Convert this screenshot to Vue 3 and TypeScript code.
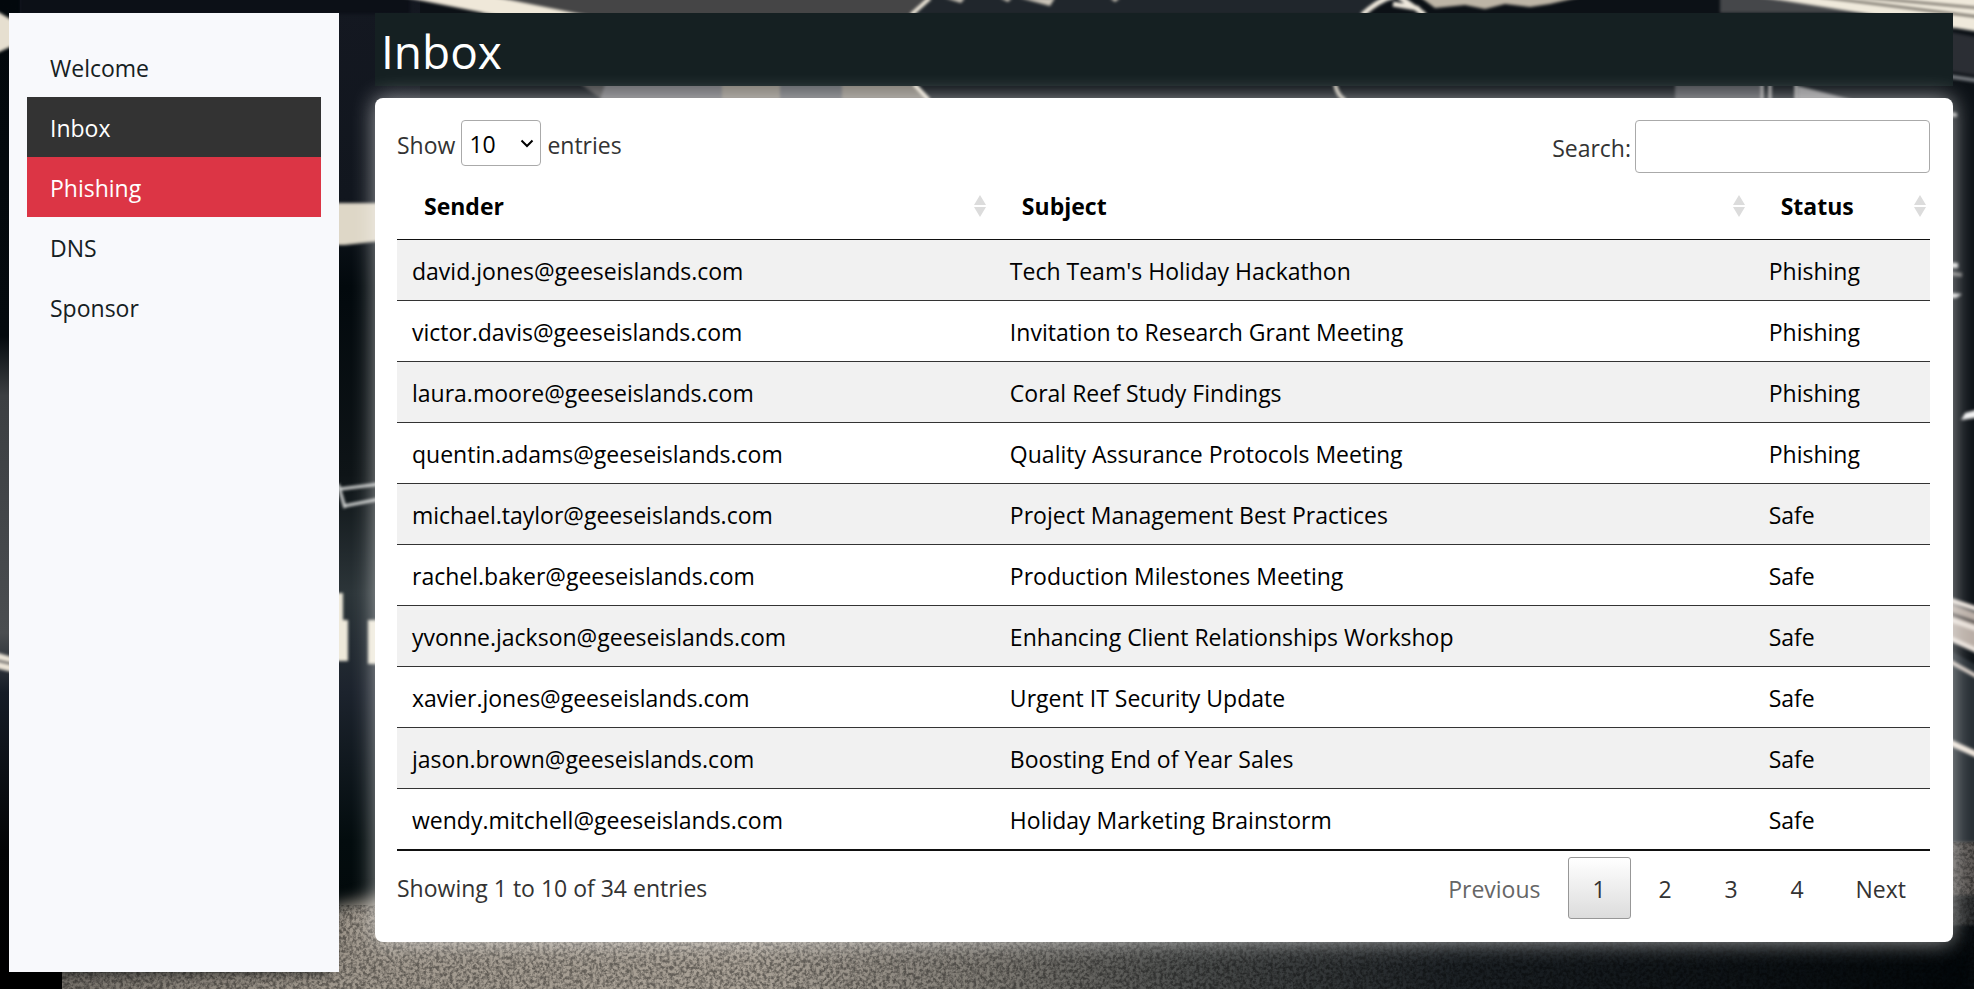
<script setup lang="ts">
import { computed, ref } from 'vue'

interface Mail {
  sender: string
  subject: string
  status: 'Phishing' | 'Safe'
}

interface NavItem {
  label: string
  kind: '' | 'current' | 'alert'
}

const nav: NavItem[] = [
  { label: 'Welcome', kind: '' },
  { label: 'Inbox', kind: 'current' },
  { label: 'Phishing', kind: 'alert' },
  { label: 'DNS', kind: '' },
  { label: 'Sponsor', kind: '' },
]

const columns = ['Sender', 'Subject', 'Status']

const mails: Mail[] = [
  { sender: 'david.jones@geeseislands.com', subject: "Tech Team's Holiday Hackathon", status: 'Phishing' },
  { sender: 'victor.davis@geeseislands.com', subject: 'Invitation to Research Grant Meeting', status: 'Phishing' },
  { sender: 'laura.moore@geeseislands.com', subject: 'Coral Reef Study Findings', status: 'Phishing' },
  { sender: 'quentin.adams@geeseislands.com', subject: 'Quality Assurance Protocols Meeting', status: 'Phishing' },
  { sender: 'michael.taylor@geeseislands.com', subject: 'Project Management Best Practices', status: 'Safe' },
  { sender: 'rachel.baker@geeseislands.com', subject: 'Production Milestones Meeting', status: 'Safe' },
  { sender: 'yvonne.jackson@geeseislands.com', subject: 'Enhancing Client Relationships Workshop', status: 'Safe' },
  { sender: 'xavier.jones@geeseislands.com', subject: 'Urgent IT Security Update', status: 'Safe' },
  { sender: 'jason.brown@geeseislands.com', subject: 'Boosting End of Year Sales', status: 'Safe' },
  { sender: 'wendy.mitchell@geeseislands.com', subject: 'Holiday Marketing Brainstorm', status: 'Safe' },
]

const total = 34
const pageSize = ref(10)
const query = ref('')
const page = ref(1)

const rows = computed(() => {
  const q = query.value.trim().toLowerCase()
  return mails.filter((m) => `${m.sender} ${m.subject} ${m.status}`.toLowerCase().includes(q))
})
</script>

<template>
  <div class="page">
    <svg class="backdrop" viewBox="0 0 1974 989" preserveAspectRatio="none" aria-hidden="true">
      <defs>
        <filter id="soft" x="-5%" y="-5%" width="110%" height="110%" color-interpolation-filters="sRGB">
          <feGaussianBlur stdDeviation="1.5" />
        </filter>
        <filter id="softer" x="-5%" y="-20%" width="110%" height="140%" color-interpolation-filters="sRGB">
          <feGaussianBlur stdDeviation="8" />
        </filter>
        <filter id="grain" x="0" y="0" width="100%" height="100%" color-interpolation-filters="sRGB">
          <feTurbulence type="fractalNoise" baseFrequency="0.3" numOctaves="3" seed="4" />
          <feColorMatrix values="0 0 0 0 0  0 0 0 0 0  0 0 0 0 0  3 0 0 0 -1.1" />
        </filter>
        <linearGradient id="floor" gradientUnits="userSpaceOnUse" x1="0" x2="1974" y1="0" y2="0">
          <stop offset="0" stop-color="#6c6862" />
          <stop offset="0.16" stop-color="#a0988d" />
          <stop offset="0.38" stop-color="#aaa297" />
          <stop offset="0.5" stop-color="#7f7b74" />
          <stop offset="0.6" stop-color="#4b4d4c" />
          <stop offset="0.74" stop-color="#1b2024" />
          <stop offset="1" stop-color="#02070a" />
        </linearGradient>
        <linearGradient id="wall" x1="0" x2="0" y1="0" y2="1">
          <stop offset="0" stop-color="#141821" />
          <stop offset="0.2" stop-color="#11161e" />
          <stop offset="0.29" stop-color="#02090d" />
          <stop offset="0.48" stop-color="#0e1417" />
          <stop offset="0.6" stop-color="#2c3539" />
          <stop offset="0.7" stop-color="#1c232d" />
          <stop offset="0.85" stop-color="#030c0e" />
          <stop offset="1" stop-color="#020708" />
        </linearGradient>
        <linearGradient id="edge" x1="0" x2="0" y1="0" y2="1">
          <stop offset="0" stop-color="#02080c" />
          <stop offset="0.34" stop-color="#040a0e" />
          <stop offset="0.4" stop-color="#3c3f42" />
          <stop offset="0.64" stop-color="#4a4d50" />
          <stop offset="0.7" stop-color="#151c26" />
          <stop offset="0.86" stop-color="#030405" />
          <stop offset="1" stop-color="#000" />
        </linearGradient>
      </defs>
      <rect width="1974" height="989" fill="#0c1116" />
      <rect x="20" width="400" height="989" fill="url(#wall)" />
      <rect width="20" height="989" fill="url(#edge)" />
      <path d="M330 908 380 896H1974V1010H40V970H330z" fill="url(#floor)" filter="url(#softer)" />
      <g filter="url(#soft)">
        <rect x="20" y="-4" width="390" height="18" fill="#0c1017" />
        <path d="M-5 10 12 20V46L-5 54z" fill="#e6dfd0" />
        <path d="M-5 652 12 657V672L-5 668z" fill="#ece5d8" />
        <path d="M-5 660 12 664" stroke="#555" stroke-width="2" />
        <path d="M460-3H930L905 98H600z" fill="#454546" />
        <path d="M398-4H490L590 16H500z" fill="#efe8d9" />
        <path d="M605 84H722V100H600z" fill="#68686c" />
        <path d="M722 84h58v16h-58zM842 84h75l12 16h-87z" fill="#847f77" />
        <path d="M780 84h62v16h-62z" fill="#606266" />
        <path d="M932-3H1400L1360 15H912z" fill="#20262c" />
        <path d="M930-2 911 15M914 84l15 16" stroke="#efe8da" stroke-width="4" fill="none" />
        <path d="M945-2h20l-4 5zM1020-2h35l-5 8zM1000-2h12l-4 4zM1110-2h10l-5 4z" fill="#c9c3b7" />
        <path d="M1362 15q18-16 32-19M1393 4l24 4 8 8M1398-4l26 18" stroke="#efe9dd" stroke-width="5" fill="none" />
        <path d="M1420-3h160l-30 7-20 3-25-3-20 5-20-4-30 3z" fill="#bdb5a6" />
        <path d="M1335 84q2 11 10 16" stroke="#c8c2b6" stroke-width="4" fill="none" />
        <path d="M1675 84h85v16h-85z" fill="#45474c" />
        <path d="M1762 84v16M1770 84v16M1796 84v16" stroke="#a9a8a8" stroke-width="3" />
        <path d="M1798 86l55 14h-55z" fill="#8b8b8d" />
        <path d="M1720-3h80l155 32V13H1720z" fill="#45474a" />
        <path d="M1760-3H1980V32L1830 8z" fill="#efe9db" />
        <path d="M1820-3 1980 17M1860-3 1980 8" stroke="#625d55" stroke-width="2" />
        <path d="M1940 30 1980 38V76L1940 70z" fill="#2b2e34" />
        <path d="M1940 75 1980 81" stroke="#777b80" stroke-width="4" />
        <path d="M1940 110l17 3v4h-17z" fill="#aaa" />
        <path d="M1940 262l18 1v5h-18zM1940 292l22 2-6 4h-16z" fill="#ddd" />
        <path d="M1940 272l22 3" stroke="#777" stroke-width="4" />
        <path d="M1980 409l-15 4-4 7 19-3z" fill="#f2f2f2" />
        <path d="M1940 600 1980 614V655L1940 632z" fill="#b9aea6" />
        <path d="M1940 597l40 13M1940 616l40 14M1940 634l40 18" stroke="#e9e1da" stroke-width="5" />
        <path d="M1940 610l40 14" stroke="#5d5855" stroke-width="3" />
        <path d="M1940 645l40 22V845H1940z" fill="#252c32" />
        <path d="M1940 656l40 22" stroke="#d6ccc4" stroke-width="4" />
        <path d="M1940 738l40 18" stroke="#efe6dc" stroke-width="6" />
        <path d="M330 203H390V240L345 245H330z" fill="#ded7c7" />
        <path d="M338 484l7 24M340 489l40-5M344 506l36-7" stroke="#d3d5d4" stroke-width="3" fill="none" />
        <path d="M330 593h13v27h5v41h-18zM368 620h14v44h-14z" fill="#eee9da" />
        <rect x="1940" y="842" width="40" height="60" fill="#5a5653" />
        <path d="M1940 895h40v30h-40z" fill="#2a2c2d" />
      </g>
      <rect x="62" y="905" width="1912" height="84" filter="url(#grain)" opacity="0.4" />
      <rect x="1940" y="842" width="34" height="63" filter="url(#grain)" opacity="0.4" />
      <rect y="960" width="62" height="29" fill="#000" />
    </svg>

    <nav class="sidebar" aria-label="Main">
      <a v-for="item in nav" :key="item.label" href="#" class="nav-link" :class="item.kind">{{ item.label }}</a>
    </nav>

    <main class="main">
      <h1 class="title">Inbox</h1>
      <section class="card">
        <div class="toolbar">
          <div class="length">
            <label for="page-size">Show</label>
            <span class="select-box">
              <select id="page-size" v-model.number="pageSize">
                <option :value="10">10</option>
                <option :value="25">25</option>
                <option :value="50">50</option>
                <option :value="100">100</option>
              </select>
              <svg class="chevron" viewBox="0 0 14 9" aria-hidden="true"><path d="M1.5 1.5 7 7l5.500-5.500" /></svg>
            </span>
            <span>entries</span>
          </div>
          <div class="search">
            <label for="search">Search:</label>
            <input id="search" v-model="query" type="search" />
          </div>
        </div>

        <table class="mails">
          <thead>
            <tr>
              <th v-for="c in columns" :key="c" scope="col">
                <button type="button" class="sort">
                  {{ c }}
                  <svg viewBox="0 0 12 22" aria-hidden="true"><path d="M6 0l6 10H0zM6 22l6-10H0z" /></svg>
                </button>
              </th>
            </tr>
          </thead>
          <tbody>
            <tr v-for="m in rows" :key="m.sender">
              <td>{{ m.sender }}</td>
              <td>{{ m.subject }}</td>
              <td>{{ m.status }}</td>
            </tr>
          </tbody>
        </table>

        <div class="footer">
          <div>Showing 1 to 10 of {{ total }} entries</div>
          <div class="pager">
            <button type="button" :disabled="page === 1" @click="page--">Previous</button>
            <button v-for="n in 4" :key="n" type="button" :class="{ active: n === page }" @click="page = n">{{ n }}</button>
            <button type="button" :disabled="page === 4" @click="page++">Next</button>
          </div>
        </div>
      </section>
    </main>
  </div>
</template>

<style>
body {
  margin: 0;
  background: #0c1116;
}
</style>

<style scoped>
.page {
  position: relative;
  display: flex;
  gap: 36px;
  box-sizing: border-box;
  min-height: 100vh;
  padding: 13px 21px 17px 9px;
  font-family: 'Open Sans', 'Noto Sans', sans-serif;
  font-size: 23px;
  line-height: 36px;
  color: #333;
}

.backdrop {
  position: absolute;
  inset: 0;
  width: 100%;
  height: 100%;
}

.sidebar {
  position: relative;
  flex: 0 0 330px;
  box-sizing: border-box;
  padding: 24px 18px;
  background: #f8f9fc;
}

.nav-link {
  display: block;
  padding: 13px 23px 11px;
  color: #152022;
  text-decoration: none;
}

.nav-link.current {
  background: #333;
  color: #fff;
}

.nav-link.alert {
  background: #dc3545;
  color: #fff;
}

.main {
  position: relative;
  flex: 1;
  min-width: 0;
}

.title {
  margin: 0 0 12px;
  padding: 10px 6px 6px;
  background: #152022;
  color: #fff;
  font-size: 46px;
  font-weight: 400;
  line-height: 57px;
}

.card {
  padding: 22px 23px 23px 22px;
  border-radius: 8px;
  background: #fff;
  box-shadow: 0 0 22px rgba(255, 255, 255, 0.6);
}

.toolbar {
  display: flex;
  justify-content: space-between;
  align-items: flex-start;
}

.length {
  display: flex;
  align-items: center;
  gap: 6px;
  height: 49px;
}

.select-box {
  position: relative;
  display: inline-flex;
  align-self: flex-start;
}

select {
  appearance: none;
  box-sizing: border-box;
  width: 80px;
  height: 46px;
  padding: 2px 7px 0;
  border: 1px solid #aaa;
  border-radius: 4px;
  background: transparent;
  color: #000;
  font: inherit;
}

.chevron {
  position: absolute;
  top: 19px;
  right: 7px;
  width: 14px;
  height: 9px;
  pointer-events: none;
}

.chevron path {
  fill: none;
  stroke: #000;
  stroke-width: 2;
}

.search {
  display: flex;
  align-items: center;
  gap: 4px;
}

.search label {
  padding-top: 2px;
}

.search input {
  box-sizing: border-box;
  width: 295px;
  height: 53px;
  padding: 7px;
  border: 1px solid #aaa;
  border-radius: 4px;
  background: transparent;
  font: inherit;
}

.mails {
  width: 100%;
  table-layout: fixed;
  border-collapse: separate;
  border-spacing: 0;
  border-bottom: 2px solid #111;
  color: #000;
}

th {
  padding: 0;
  border-bottom: 1px solid #111;
}

th:nth-child(1) {
  width: 39%;
}

th:nth-child(2) {
  width: 49.5%;
}

.sort {
  display: flex;
  justify-content: space-between;
  align-items: center;
  width: 100%;
  padding: 15px 9px 15px 27px;
  border: 0;
  background: none;
  color: #000;
  font: inherit;
  font-weight: 700;
}

th:last-child .sort {
  padding-right: 4px;
}

.sort svg {
  width: 12px;
  height: 22px;
  fill: #dcdcdc;
}

td {
  padding: 13px 15px 11px;
}

tbody tr:nth-child(odd) {
  background: #f1f1f1;
}

tbody tr + tr td {
  border-top: 1px solid #333;
}

.footer {
  display: flex;
  justify-content: space-between;
  align-items: center;
  padding-top: 6px;
}

.pager {
  display: flex;
  gap: 3px;
}

.pager button {
  box-sizing: border-box;
  min-width: 63px;
  height: 62px;
  padding: 2px 23px 0;
  border: 1px solid transparent;
  border-radius: 3px;
  background: none;
  color: #333;
  font: inherit;
}

.pager button:disabled {
  color: #666;
}

.pager button.active {
  border-color: #979797;
  background: linear-gradient(#fff, #dcdcdc);
}
</style>
